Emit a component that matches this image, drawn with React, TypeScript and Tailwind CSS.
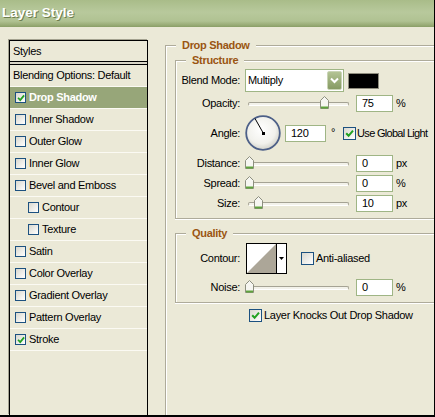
import type { ReactNode } from 'react'

const BG = 'bg-[#ebe9d7]'

interface StyleItem {
  label: string
  checked?: boolean
  selected?: boolean
  indent?: boolean
}

const styleItems: StyleItem[] = [
  { label: 'Drop Shadow', checked: true, selected: true },
  { label: 'Inner Shadow' },
  { label: 'Outer Glow' },
  { label: 'Inner Glow' },
  { label: 'Bevel and Emboss' },
  { label: 'Contour', indent: true },
  { label: 'Texture', indent: true },
  { label: 'Satin' },
  { label: 'Color Overlay' },
  { label: 'Gradient Overlay' },
  { label: 'Pattern Overlay' },
  { label: 'Stroke', checked: true },
]

function CheckBox({ checked = false, small = false }: { checked?: boolean; small?: boolean }) {
  return (
    <span
      className={`flex shrink-0 items-center justify-center border border-[#1c5180] bg-linear-to-br from-[#d9d8cf] to-white ${
        small ? 'h-[11px] w-[11px]' : 'h-[13px] w-[13px]'
      }`}
    >
      {checked && (
        <svg width={small ? 8 : 9} height={small ? 8 : 9} viewBox="0 0 9 9">
          <path d="M1.2 4.2 L3.6 6.8 L8 1.6" fill="none" stroke="#21a121" strokeWidth="2" />
        </svg>
      )}
    </span>
  )
}

function Legend({ children }: { children: ReactNode }) {
  return (
    <div className={`-mt-[7px] ml-[10px] h-[13px] w-fit px-[6px] font-bold leading-[13px] text-[#9a5512] ${BG}`}>
      {children}
    </div>
  )
}

function Row({ label, children, className = '' }: { label: string; children: ReactNode; className?: string }) {
  return (
    <div className={`flex items-center ${className}`}>
      <span className="w-[64px] shrink-0 text-right">{label}</span>
      <div className="ml-[5px] flex items-center">{children}</div>
    </div>
  )
}

function ValueBox({ value, width = 37 }: { value: string; width?: number }) {
  return (
    <div
      className={`flex h-[17px] items-center border border-[#9fb585] bg-white px-[5px] ${
        width === 41 ? 'w-[41px]' : 'w-[37px]'
      }`}
    >
      {value}
    </div>
  )
}

function Slider({ thumb }: { thumb: number }) {
  // thumb = pixel centre of the thumb, measured from the slider's left edge
  return (
    <div className="relative flex h-[17px] w-[107px] items-center px-[3px]">
      <div className="h-[4px] flex-1 rounded-full border border-[#a5a394] border-b-white bg-[#f3f2ea]" />
      <svg
        className="absolute top-[1px]"
        style={{ left: thumb - 4.5 }}
        width="9"
        height="13"
        viewBox="0 0 9 13"
      >
        <path d="M4.5 0.5 L8.5 4.5 V12.5 H0.5 V4.5 Z" fill="#f6f6f1" stroke="#8d8f7f" />
        <path d="M1 11.5 H8" stroke="#5fa33c" strokeWidth="2" />
      </svg>
    </div>
  )
}

function SliderRow({
  label,
  value,
  unit,
  thumb,
  className = '',
}: {
  label: string
  value: string
  unit: string
  thumb: number
  className?: string
}) {
  return (
    <Row label={label} className={`h-[17px] ${className}`}>
      <Slider thumb={thumb} />
      <div className="ml-[4px]">
        <ValueBox value={value} />
      </div>
      <span className="ml-[3px]">{unit}</span>
    </Row>
  )
}

function AngleDial() {
  return (
    <svg width="36" height="36" viewBox="0 0 36 36">
      <defs>
        <radialGradient id="dialFill" cx="45%" cy="40%" r="60%">
          <stop offset="0%" stopColor="#ffffff" />
          <stop offset="70%" stopColor="#f1f1ec" />
          <stop offset="100%" stopColor="#d3d3cb" />
        </radialGradient>
      </defs>
      <circle cx="18" cy="18" r="16.8" fill="url(#dialFill)" stroke="#4d6088" strokeWidth="1.8" />
      <line x1="18.5" y1="18.5" x2="10" y2="3.5" stroke="#000" strokeWidth="1" />
      <rect x="17" y="17" width="3" height="3" fill="#000" />
    </svg>
  )
}

export default function App() {
  return (
    <div
      className={`flex h-[417px] w-[435px] flex-col overflow-hidden border-r border-b-2 border-black ${BG} font-['Liberation_Sans',Arial,sans-serif] text-[11px] tracking-[-0.3px] text-black`}
    >
      {/* Title bar */}
      <div className="flex h-[27px] shrink-0 items-center bg-[linear-gradient(to_bottom,#a9bc89_0%,#b8c99c_45%,#b0c292_78%,#98ab75_93%,#8a9e66_100%)] pl-[2px]">
        <span className="text-[13.5px] font-bold tracking-normal text-white [text-shadow:1px_1px_0_#6d7d4e]">
          Layer Style
        </span>
      </div>

      <div className="flex min-h-0 flex-1">
        {/* Styles list */}
        <div className="mt-[13px] ml-[9px] flex w-[139px] shrink-0 flex-col border-x border-t border-black shadow-[-1px_-1px_0_#a4a290]">
          <div className="flex h-[21px] items-center border-b border-black pl-[3px]">Styles</div>
          <div className="h-[2px] bg-[#d8d5c6]" />
          <div className="box-content flex h-[21px] items-center border-t border-black pl-[3px]">
            Blending Options: Default
          </div>
          <div className="border-b border-[#fbfaf3]" />
          {styleItems.map((item) => (
            <div
              key={item.label}
              className={`flex h-[22px] items-center gap-[3px] border-b border-[#fbfaf3] ${
                item.indent ? 'pl-[18px]' : 'pl-[5px]'
              } ${item.selected ? 'bg-[#97a679] font-bold text-white' : ''}`}
            >
              <CheckBox small checked={item.checked} />
              <span>{item.label}</span>
            </div>
          ))}
        </div>

        {/* Settings */}
        <div className="mt-[18px] ml-[17px] flex min-w-0 flex-1 flex-col">
          <div className="flex flex-1 flex-col border-t border-l border-[#aeab9a] shadow-[inset_1px_1px_0_#fff]">
            <Legend>Drop Shadow</Legend>

            {/* Structure */}
            <div className="mt-[8px] ml-[9px] flex flex-col border-y border-l border-[#aeab9a] pb-[6px] shadow-[inset_1px_1px_0_#fff,0_1px_0_#fff]">
              <Legend>Structure</Legend>

              <Row label="Blend Mode:" className="mt-[2px] h-[23px]">
                <div className="flex h-[23px] w-[99px] items-center justify-between border border-[#9fb585] bg-white pr-[1px] pl-[2px]">
                  <span>Multiply</span>
                  <span className="flex h-[19px] w-[15px] items-center justify-center rounded-[2px] border border-[#c9d4b5] bg-linear-to-b from-[#b3c494] to-[#869a63]">
                    <svg width="9" height="7" viewBox="0 0 9 7">
                      <path d="M1 1.5 L4.5 5 L8 1.5" fill="none" stroke="#fff" strokeWidth="2" />
                    </svg>
                  </span>
                </div>
                <div className="ml-[4px] h-[16px] w-[31px] border border-[#8f8d7e] bg-black" />
              </Row>

              <SliderRow label="Opacity:" value="75" unit="%" thumb={79} className="mt-[3px]" />

              <Row label="Angle:" className="mt-[3px] h-[36px]">
                <AngleDial />
                <div className="ml-[4px]">
                  <ValueBox value="120" width={41} />
                </div>
                <span className="ml-[5px] self-start pt-[9px]">°</span>
                <span className="ml-[8px]">
                  <CheckBox checked />
                </span>
                <span className="ml-[1px] whitespace-nowrap tracking-[-0.7px]">Use Global Light</span>
              </Row>

              <SliderRow label="Distance:" value="0" unit="px" thumb={4} className="mt-[4px]" />
              <SliderRow label="Spread:" value="0" unit="%" thumb={4} className="mt-[3px]" />
              <SliderRow label="Size:" value="10" unit="px" thumb={13} className="mt-[3px]" />
            </div>

            {/* Quality */}
            <div className="mt-[14px] ml-[9px] flex flex-col border-y border-l border-[#aeab9a] pb-[6px] shadow-[inset_1px_1px_0_#fff,0_1px_0_#fff]">
              <Legend>Quality</Legend>

              <Row label="Contour:" className="mt-[3px] h-[31px]">
                <div className="ml-[1px] flex h-[31px] w-[41px] border border-black bg-white">
                  <svg className="border-r border-black" width="30" height="29" viewBox="0 0 29 29">
                    <polygon points="0,29 29,0 29,29" fill="#aca698" />
                  </svg>
                  <div className="flex flex-1 items-center justify-center">
                    <svg width="5" height="3" viewBox="0 0 5 3">
                      <path d="M0 0 H5 L2.5 3 Z" fill="#000" />
                    </svg>
                  </div>
                </div>
                <span className="ml-[14px]">
                  <CheckBox />
                </span>
                <span className="ml-[2px]">Anti-aliased</span>
              </Row>

              <SliderRow label="Noise:" value="0" unit="%" thumb={4} className="mt-[5px]" />
            </div>

            <div className="mt-[6px] ml-[83px] flex h-[13px] items-center">
              <CheckBox checked />
              <span className="ml-[2px] whitespace-nowrap">Layer Knocks Out Drop Shadow</span>
            </div>
          </div>
        </div>
      </div>
    </div>
  )
}
